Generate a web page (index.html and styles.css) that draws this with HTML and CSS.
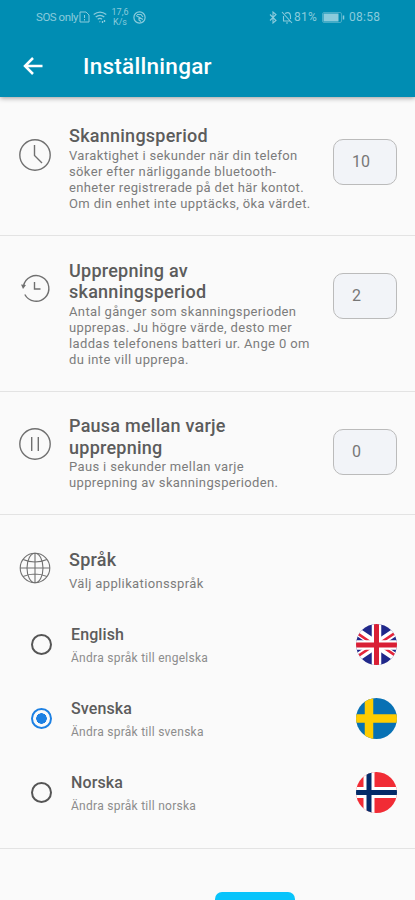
FILE: index.html
```html
<!DOCTYPE html>
<html lang="sv">
<head>
<meta charset="utf-8">
<title>Inställningar</title>
<link rel="stylesheet" href="styles.css">
</head>
<body>
<header class="header">
  <div class="status">
    <div class="status-left">
      <span class="carrier">SOS only</span>
      <svg class="sim" width="11" height="12" viewBox="0 0 11 12" fill="none" stroke="currentColor"><path d="M1 1h6l3 3v7H1zM5.500 4v3M5.500 8v1.500"/></svg>
      <svg class="wifi" width="14" height="13" viewBox="0 0 14 13" fill="none" stroke="currentColor" stroke-width="1.300"><path d="M.7 3.600Q7-1.200 13.300 3.600M2.700 6Q7 2.700 11.300 6M4.700 8.300Q7 6.600 9 8.300M6.500 10.500l.7.500M9.500 10v2M11.500 9v2"/></svg>
      <span class="speed"><span>17,6</span><span>K/s</span></span>
      <svg class="saver" width="13" height="13" viewBox="0 0 13 13" fill="none" stroke="currentColor" stroke-width="1.200"><circle cx="6.500" cy="6.500" r="5.600"/><path d="M3 4.500l7 4M4 3.500h4l2 2.500M6 6v3l2 1.500"/></svg>
    </div>
    <div class="status-right">
      <svg width="8" height="13" viewBox="0 0 8 13" fill="none" stroke="currentColor" stroke-width="1.100"><path d="M1 3.500l6 6-3 2.500V1l3 2.500-6 6"/></svg>
      <svg class="bell" width="12" height="13" viewBox="0 0 12 13" fill="none" stroke="currentColor" stroke-width="1.100"><path d="M1 1l10 11M2 10h7M2.500 9.500V5M4 2.500Q9 0 9.500 5v3M5 12h2"/></svg>
      <span class="percent">81%</span>
      <svg class="battery" width="23" height="11" viewBox="0 0 23 11"><rect x=".5" y=".5" width="19" height="10" rx="1.500" fill="none" stroke="currentColor" opacity=".5"/><path d="M1.500 1.500h15v8h-15z" fill="currentColor"/><path d="M21.500 3.500v4" stroke="currentColor" stroke-width="1.500"/></svg>
      <span class="clock">08:58</span>
    </div>
  </div>
  <div class="bar">
    <svg width="20" height="18" viewBox="0 0 20 18" fill="none" stroke="#fff" stroke-width="2.500"><path d="M19.500 9H2.500M10 1L2 9l8 8"/></svg>
    <h1>Inställningar</h1>
  </div>
</header>
<main>
  <section class="setting">
    <svg class="icon" viewBox="0 0 32 32"><circle cx="16" cy="16" r="15.200"/><path d="M15.500 6v10.500l7.500 7.500"/></svg>
    <div class="copy">
      <h2>Skanningsperiod</h2>
      <p>Varaktighet i sekunder när din telefon<br>söker efter närliggande bluetooth-<br>enheter registrerade på det här kontot.<br>Om din enhet inte upptäcks, öka värdet.</p>
    </div>
    <div class="field">10</div>
  </section>
  <section class="setting repeat">
    <svg class="icon" viewBox="0 0 32 32"><path d="M4.500 14A12.800 12.800 0 1 1 5.800 22.500M15.500 10v7h6"/><path d="M2 12.500l5 .5-3 4z" fill="#707070" stroke="none"/></svg>
    <div class="copy">
      <h2>Upprepning av<br>skanningsperiod</h2>
      <p>Antal gånger som skanningsperioden<br>upprepas. Ju högre värde, desto mer<br>laddas telefonens batteri ur. Ange 0 om<br>du inte vill upprepa.</p>
    </div>
    <div class="field">2</div>
  </section>
  <section class="setting pause">
    <svg class="icon" viewBox="0 0 32 32"><circle cx="16" cy="16" r="15.200"/><path d="M12.700 9v14M19.300 9v14"/></svg>
    <div class="copy">
      <h2>Pausa mellan varje<br>upprepning</h2>
      <p>Paus i sekunder mellan varje<br>upprepning av skanningsperioden.</p>
    </div>
    <div class="field">0</div>
  </section>
  <section class="languages">
    <div class="language-head">
      <svg class="icon" viewBox="0 0 32 32"><circle cx="16" cy="16" r="14.800"/><ellipse cx="16" cy="16" rx="8" ry="14.800"/><path d="M16 1v30M1 16h30M4 7.500q12 5 24 0M4 24.500q12-5 24 0"/></svg>
      <div class="copy"><h2>Språk</h2><p>Välj applikationsspråk</p></div>
    </div>
    <div class="option">
      <span class="radio"></span>
      <div class="label"><h3>English</h3><p>Ändra språk till engelska</p></div>
      <svg class="flag" viewBox="0 0 41 41"><defs><clipPath id="disc"><circle cx="20.500" cy="20.500" r="20.500"/></clipPath></defs><g clip-path="url(#disc)"><path fill="#20288a" d="M0 0h41v41H0z"/><path d="M-7 2l55 37M-7 39L48 2" stroke="#fff" stroke-width="8"/><path d="M-8 3L20 22M49 38L21 19M-7 38l27-18M48 3L21 21" stroke="#e3253b" stroke-width="2.600"/><path d="M20.500 0v41M0 21h41" stroke="#fff" stroke-width="9.500"/><path d="M20.500 0v41M0 21h41" stroke="#d91f35" stroke-width="5"/></g></svg>
    </div>
    <div class="option">
      <span class="radio selected"></span>
      <div class="label"><h3>Svenska</h3><p>Ändra språk till svenska</p></div>
      <svg class="flag" viewBox="0 0 41 41"><g clip-path="url(#disc)"><path fill="#0871b4" d="M0 0h41v41H0z"/><path d="M13 0v41M0 20.500h41" stroke="#fc0" stroke-width="8.500"/></g></svg>
    </div>
    <div class="option">
      <span class="radio"></span>
      <div class="label"><h3>Norska</h3><p>Ändra språk till norska</p></div>
      <svg class="flag" viewBox="0 0 41 41"><g clip-path="url(#disc)"><path fill="#f12c35" d="M0 0h41v41H0z"/><path d="M13 0v41M0 20.500h41" stroke="#fff" stroke-width="11"/><path d="M13 0v41M0 20.500h41" stroke="#042b68" stroke-width="5"/></g></svg>
    </div>
  </section>
  <div class="save"></div>
</main>
</body>
</html>
```

FILE: styles.css
```css
* { box-sizing: border-box; }
html { overflow: hidden; }
body { margin: 0; height: 900px; overflow: hidden; background: #fafafa; color: #5c5c5c; font-family: Roboto, sans-serif; }
h1, h2, h3, p { margin: 0; }
svg { display: block; flex: none; }
.header { height: 97px; background: #008db3; box-shadow: 0 1px 5px rgba(0, 0, 0, .4); }
.status { height: 34px; padding: 0 33px 0 36px; display: flex; justify-content: space-between; color: #8acbdc; font-size: 11.500px; }
.status-left, .status-right { display: flex; align-items: center; white-space: nowrap; }
.carrier { width: 42px; letter-spacing: -.45px; }
.sim { margin-left: 1px; }
.wifi { margin-left: 3px; }
.speed { margin-left: 4px; width: 18px; display: flex; flex-direction: column; align-items: center; font-size: 9px; line-height: 10px; }
.saver { margin-left: 4px; }
.bell { margin-left: 4px; }
.percent { margin-left: 1px; width: 26px; font-size: 12px; letter-spacing: .3px; }
.battery { margin-left: 2px; }
.clock { margin-left: 4px; width: 33px; font-size: 12px; letter-spacing: .3px; }
.bar { height: 63px; padding: 1px 0 0 23px; display: flex; align-items: center; gap: 40px; color: #fff; }
h1 { font-size: 22.500px; font-weight: 500; line-height: 28px; letter-spacing: .28px; }
main { padding-top: 4px; }
.setting { height: 135px; padding: 24px 18px 0 19px; display: flex; border-bottom: 1px solid #e3e3e3; }
.repeat { height: 156px; padding-top: 23.500px; }
.pause { height: 123px; padding-top: 23px; }
.icon { width: 32px; height: 32px; flex: none; fill: none; stroke: #707070; stroke-width: 1.400; }
.setting .icon { margin-top: 14px; }
.repeat .icon { margin-top: 12.500px; }
.pause .icon { margin-top: 13px; }
.copy { margin-left: 18px; flex: 1; white-space: nowrap; }
h2 { font-size: 18px; line-height: 22px; font-weight: 500; letter-spacing: .25px; }
.repeat h2, .pause h2 { line-height: 21.700px; }
.copy p { margin-top: 1px; font-size: 13px; line-height: 16px; letter-spacing: .36px; color: #7c7c7c; }
.field { width: 64px; height: 46px; margin-top: 14px; padding-left: 18px; border: 1px solid #bbb; border-radius: 10px; background: #f2f4f8; font-size: 16px; line-height: 44px; color: #777; }
.repeat .field { margin-top: 13.500px; }
.languages { height: 334px; padding: 34px 18px 0 19px; border-bottom: 1px solid #e3e3e3; }
.language-head { height: 59px; display: flex; }
.language-head .icon { margin-top: 3px; stroke-width: 1.100; }
.language-head .copy p { margin-top: 5px; }
.option { height: 73.800px; padding-left: 12px; display: flex; align-items: center; }
.radio { width: 21px; height: 21px; border: 2px solid #555; border-radius: 50%; }
.selected { border-color: #1c80e3; background: radial-gradient(circle, #1c80e3 5px, transparent 5.500px); }
.label { margin-left: 19px; padding-top: 3px; flex: 1; white-space: nowrap; }
h3 { font-size: 16px; line-height: 22px; font-weight: 500; letter-spacing: .1px; }
.label p { margin-top: 2px; font-size: 12px; line-height: 20px; letter-spacing: .27px; color: #8c8c8c; }
.flag { width: 41px; height: 41px; }
.save { width: 80px; height: 48px; margin: 43px 0 0 215px; border-radius: 7px; background: #08c4fb; }
```
